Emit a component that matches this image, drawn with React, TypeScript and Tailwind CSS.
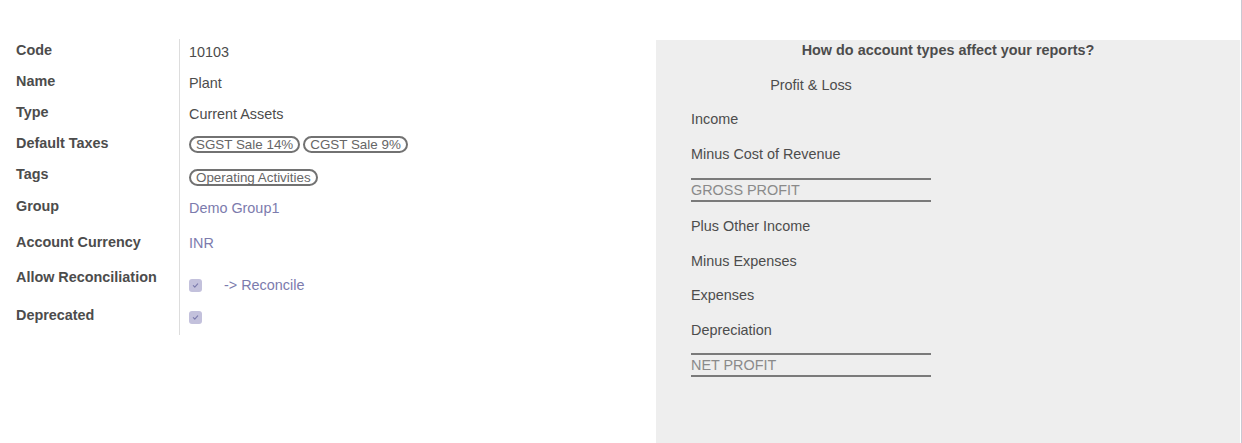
import React from "react";

const Check: React.FC = () => (
  <span className="inline-flex h-[13px] w-[13px] items-center justify-center rounded-[3px] bg-[#c3c1dc]">
    <svg width="7" height="7" viewBox="0 0 8 8" fill="none">
      <path d="M1.5 4.2 L3.2 5.8 L6.5 2.2" stroke="#7c7bad" strokeWidth="1.3" strokeLinecap="round" strokeLinejoin="round" />
    </svg>
  </span>
);

const Badge: React.FC<{ text: string }> = ({ text }) => (
  <span className="inline-block rounded-full border-2 border-[#727272] px-[5px] text-[13.4px] leading-[13px] text-[#666]">
    {text}
  </span>
);

type Row = { label: string; row: string; val: string; content: React.ReactNode };

const rows: Row[] = [
  { label: "Code", row: "h-[31px]", val: "pt-[3px]", content: "10103" },
  { label: "Name", row: "h-[31px]", val: "pt-[3px]", content: "Plant" },
  { label: "Type", row: "h-[31px]", val: "pt-[3px]", content: "Current Assets" },
  {
    label: "Default Taxes",
    row: "h-[31px]",
    val: "pt-[4px]",
    content: (
      <div className="flex gap-[3px]">
        <Badge text="SGST Sale 14%" />
        <Badge text="CGST Sale 9%" />
      </div>
    ),
  },
  { label: "Tags", row: "h-[32px]", val: "pt-[4px]", content: <Badge text="Operating Activities" /> },
  { label: "Group", row: "h-[36px]", val: "pt-[3px]", content: <span className="text-[#7c7bad]">Demo Group1</span> },
  { label: "Account Currency", row: "h-[35px]", val: "pt-[2px]", content: <span className="text-[#7c7bad]">INR</span> },
  {
    label: "Allow Reconciliation",
    row: "h-[38px]",
    val: "pt-[9px]",
    content: (
      <div className="flex h-5 items-center">
        <Check />
        <span className="ml-[22px] text-[#7c7bad]">-&gt; Reconcile</span>
      </div>
    ),
  },
  {
    label: "Deprecated",
    row: "h-[31px]",
    val: "pt-[3px]",
    content: (
      <div className="flex h-5 items-center">
        <Check />
      </div>
    ),
  },
];

const Line: React.FC<{ text: string; className: string }> = ({ text, className }) => (
  <div className={`w-[240px] border-y-2 border-[#7a7a7a] leading-5 text-[#8a8a8a] ${className}`}>{text}</div>
);

const App: React.FC = () => {
  return (
    <div
      className="flex h-[443px] w-[1242px] overflow-hidden border-r border-[#c9c8d2] bg-white pt-[39px] text-[14.4px] leading-5 text-[#4c4c4c]"
      style={{ fontFamily: '"Liberation Sans", Arial, sans-serif' }}
    >
      {/* Form */}
      <div className="w-[656px] shrink-0">
        {rows.map((r) => (
          <div key={r.label} className={`flex ${r.row}`}>
            <div className="w-[179px] pl-4 pt-px font-bold">{r.label}</div>
            <div className={`flex-1 border-l border-[#dddddd] pl-[9px] ${r.val}`}>{r.content}</div>
          </div>
        ))}
      </div>

      {/* Help panel */}
      <div className="mr-px mt-px flex-1 bg-[#eeeeee]">
        <div className="text-center font-bold">How do account types affect your reports?</div>
        <div className="pl-[35px]">
          <div className="mt-[15px] w-[240px] text-center">Profit &amp; Loss</div>
          <div className="mt-[14px]">Income</div>
          <div className="mt-[15px]">Minus Cost of Revenue</div>
          <Line text="GROSS PROFIT" className="mt-[14px]" />
          <div className="mt-[14px]">Plus Other Income</div>
          <div className="mt-[15px]">Minus Expenses</div>
          <div className="mt-[14px]">Expenses</div>
          <div className="mt-[15px]">Depreciation</div>
          <Line text="NET PROFIT" className="mt-[13px]" />
        </div>
      </div>
    </div>
  );
};

export default App;
